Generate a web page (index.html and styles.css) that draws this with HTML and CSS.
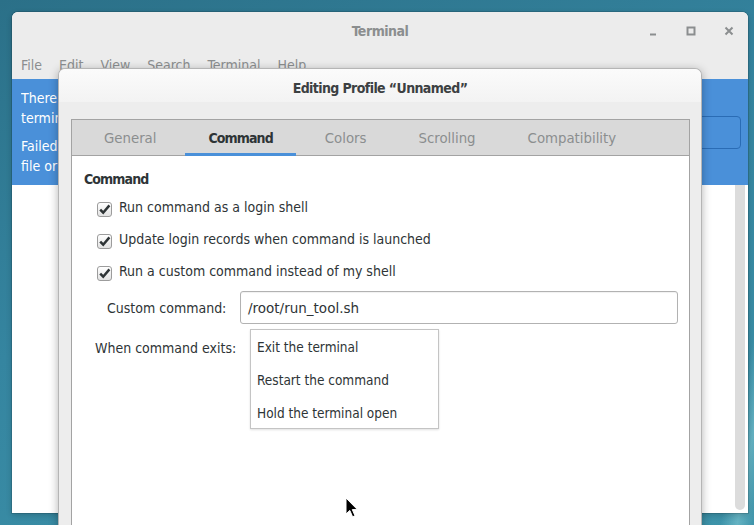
FILE: index.html
```html
<!DOCTYPE html>
<html>
<head>
<meta charset="utf-8">
<title>Terminal – Editing Profile</title>
<link rel="stylesheet" href="styles.css">
</head>
<body class="desktop">
  <div class="term-window">
    <div class="term-titlebar">
      <div class="tb-spacer"></div>
      <div class="tb-title">Terminal</div>
      <div class="tb-controls">
        <svg class="ctl" width="16" height="16" viewBox="0 0 16 16"><rect x="5" y="10.5" width="6" height="2" fill="#8b8e8f"/></svg>
        <svg class="ctl" width="16" height="16" viewBox="0 0 16 16"><rect x="4.5" y="4.5" width="7" height="7" fill="none" stroke="#8b8e8f" stroke-width="2"/></svg>
        <svg class="ctl" width="16" height="16" viewBox="0 0 16 16"><path d="M4.5 4.5 L11.5 11.5 M11.5 4.5 L4.5 11.5" stroke="#8b8e8f" stroke-width="2"/></svg>
      </div>
    </div>
    <div class="term-menubar">
      <span>File</span><span>Edit</span><span>View</span><span>Search</span><span>Terminal</span><span>Help</span>
    </div>
    <div class="infobar">
      <div class="info-text">
        <p class="info-p"><span class="line">There was</span><span class="line">terminal</span></p>
        <p class="info-p"><span class="line">Failed to</span><span class="line">file or</span></p>
      </div>
      <div class="info-btn"><span class="info-btn-label">Relaunch</span></div>
    </div>
    <div class="term-view">
      <div class="scrollbar"></div>
    </div>
  </div>

  <div class="dialog">
    <div class="dlg-header">Editing Profile “Unnamed”</div>
    <div class="dlg-body">
      <div class="notebook">
        <div class="tabs">
          <div class="tab">General</div>
          <div class="tab active">Command</div>
          <div class="tab">Colors</div>
          <div class="tab">Scrolling</div>
          <div class="tab">Compatibility</div>
        </div>
        <div class="page">
          <div class="section-title">Command</div>
          <div class="checks">
            <div class="check-row"><span class="check"><svg width="15" height="15" viewBox="0 0 15 15"><path d="M3.2 7.6 L6.2 10.7 L12.4 3.4" fill="none" stroke="#2e3436" stroke-width="2.5"/></svg></span><span>Run command as a login shell</span></div>
            <div class="check-row"><span class="check"><svg width="15" height="15" viewBox="0 0 15 15"><path d="M3.2 7.6 L6.2 10.7 L12.4 3.4" fill="none" stroke="#2e3436" stroke-width="2.5"/></svg></span><span>Update login records when command is launched</span></div>
            <div class="check-row"><span class="check"><svg width="15" height="15" viewBox="0 0 15 15"><path d="M3.2 7.6 L6.2 10.7 L12.4 3.4" fill="none" stroke="#2e3436" stroke-width="2.5"/></svg></span><span>Run a custom command instead of my shell</span></div>
          </div>
          <div class="field-row">
            <span class="field-label custom">Custom command:</span>
            <div class="entry">/root/run_tool.sh</div>
          </div>
          <div class="field-row combo-row">
            <span class="field-label exits">When command exits:</span>
            <div class="combo"></div>
          </div>
        </div>
      </div>
    </div>
  </div>

  <div class="popup">
    <div class="popup-item">Exit the terminal</div>
    <div class="popup-item">Restart the command</div>
    <div class="popup-item">Hold the terminal open</div>
  </div>

  <svg class="pointer" width="14" height="22" viewBox="0 0 14 22"><path d="M1 1 L1 17 L4.8 13.4 L7.6 19.8 L10 18.8 L7.3 12.6 L12.4 12.6 Z" fill="#000" stroke="#fff" stroke-width="1"/></svg>
</body>
</html>
```
FILE: styles.css
```css
html, body {
  margin: 0;
  padding: 0;
}

.desktop {
  width: 754px;
  height: 525px;
  overflow: hidden;
  position: relative;
  background:
    linear-gradient(100deg, rgba(255,255,255,0) 0%, rgba(255,255,255,0) 96%, rgba(140,210,220,0.5) 98%, rgba(255,255,255,0) 100%),
    linear-gradient(160deg, #2b7088 0%, #3585a0 45%, #3d93a9 100%);
  font-family: "DejaVu Sans Condensed", "DejaVu Sans", sans-serif;
  font-size: 14px;
  color: #2e3436;
}

/* Terminal window */
.term-window {
  position: absolute;
  left: 12px;
  top: 12px;
  width: 736px;
  height: 501px;
  background: #ffffff;
  border-radius: 6px 6px 0 0;
  overflow: hidden;
  display: flex;
  flex-direction: column;
  box-shadow: 0 0 0 1px rgba(0,0,0,0.12), 0 2px 6px rgba(0,0,0,0.2);
}

.term-titlebar {
  height: 38px;
  flex: none;
  background: #ececec;
  display: grid;
  grid-template-columns: 1fr auto 1fr;
  align-items: center;
}

.tb-title {
  font-weight: bold;
  letter-spacing: -0.5px;
  color: #8b8e8f;
}

.tb-controls {
  display: flex;
  justify-content: flex-end;
  gap: 22px;
  padding-right: 11px;
}

.ctl {
  display: block;
}

.term-menubar {
  height: 29px;
  flex: none;
  background: #ececec;
  display: flex;
  align-items: center;
  gap: 17px;
  padding-left: 9px;
  color: #8b8e8f;
}

.infobar {
  height: 106px;
  flex: none;
  box-sizing: border-box;
  background: #4a90d9;
  color: #ffffff;
  display: flex;
  align-items: center;
  padding: 0 7px 0 9px;
}

.info-text {
  flex: 1;
  overflow: hidden;
  align-self: flex-start;
  padding-top: 9px;
}

.info-p {
  margin: 0 0 8px 0;
}

.line {
  display: block;
  line-height: 20px;
  white-space: nowrap;
}

.info-btn {
  width: 160px;
  height: 33px;
  box-sizing: border-box;
  border: 1px solid #2a6cb5;
  border-radius: 4px;
  display: flex;
  align-items: center;
  justify-content: center;
  padding-right: 20px;
  color: #fff;
}

.term-view {
  flex: 1;
  display: flex;
  justify-content: flex-end;
  padding: 0 3px 3px 0;
}

.scrollbar {
  width: 10px;
  background: #dcdcdc;
  border-radius: 0 0 5px 5px;
}

/* Dialog */
.dialog {
  position: absolute;
  left: 58px;
  top: 68px;
  width: 644px;
  height: 480px;
  box-sizing: border-box;
  border: 1px solid #b5b5b5;
  border-bottom: none;
  border-radius: 7px 7px 0 0;
  background: #ededed;
  box-shadow: 0 2px 10px rgba(0,0,0,0.3);
  overflow: hidden;
  display: flex;
  flex-direction: column;
}

.dlg-header {
  height: 33px;
  flex: none;
  box-sizing: border-box;
  padding-top: 6px;
  line-height: 27px;
  text-align: center;
  font-weight: bold;
  letter-spacing: -0.6px;
  color: #3c4042;
  background: linear-gradient(#fbfbfb, #f3f3f3);
}

.dlg-body {
  flex: 1;
  display: flex;
  flex-direction: column;
  padding: 17px 11px 0 12px;
}

.notebook {
  flex: 1;
  display: flex;
  flex-direction: column;
  border: 1px solid #a3a3a3;
  border-bottom: none;
  background: #ffffff;
}

.tabs {
  height: 35px;
  flex: none;
  display: flex;
  background: #d9d9d9;
  border-bottom: 1px solid #a3a3a3;
  padding-left: 6px;
}

.tab {
  height: 36px;
  box-sizing: border-box;
  margin: 0 3px -1px 3px;
  padding: 2px 23px 0 23px;
  display: flex;
  align-items: center;
  border-bottom: 3px solid transparent;
  font-size: 14.8px;
  color: #8b8e8f;
}

.tab.active {
  border-bottom-color: #4a90d9;
  color: #2e3436;
  font-weight: bold;
  font-size: 14px;
  letter-spacing: -0.9px;
}

.page {
  flex: 1;
  padding: 13px 11px 0 12px;
  display: flex;
  flex-direction: column;
}

.section-title {
  line-height: 20px;
  font-weight: bold;
  letter-spacing: -0.9px;
}

.checks {
  margin-top: 2px;
}

.check-row {
  height: 32px;
  display: flex;
  align-items: center;
  padding-left: 13px;
  gap: 7px;
}

.check {
  width: 15px;
  height: 15px;
  box-sizing: border-box;
  border: 1px solid #9c9c9c;
  border-radius: 3px;
  background: linear-gradient(#ffffff, #e2e2e2);
  position: relative;
  top: 2px;
  display: flex;
  align-items: center;
  justify-content: center;
  overflow: visible;
}

.check svg {
  display: block;
  flex: none;
  margin: -1px;
}

.field-row {
  display: flex;
  align-items: center;
  margin-top: 4px;
}

.field-label.custom {
  width: 133px;
  margin-left: 23px;
  flex: none;
}

.entry {
  flex: 1;
  height: 33px;
  box-sizing: border-box;
  border: 1px solid #b2b2b2;
  border-radius: 3px;
  padding-left: 7px;
  display: flex;
  align-items: center;
  font-family: "DejaVu Sans", sans-serif;
  font-size: 13.5px;
  box-shadow: inset 0 1px 1px rgba(0,0,0,0.06);
}

.combo-row {
  margin-top: 7px;
}

.field-label.exits {
  width: 155px;
  margin-left: 11px;
  flex: none;
}

.combo {
  width: 189px;
  height: 34px;
  box-sizing: border-box;
  border: 1px solid #a8a8a8;
  border-radius: 3px;
  background: linear-gradient(#f7f7f7, #e6e6e6);
}

/* Popup menu over the combo */
.popup {
  position: absolute;
  left: 250px;
  top: 329px;
  width: 189px;
  height: 100px;
  box-sizing: border-box;
  border: 1px solid #c4c4c4;
  background: #ffffff;
  box-shadow: 0 1px 2px rgba(0,0,0,0.12);
}

.popup-item {
  height: 33px;
  display: flex;
  align-items: center;
  padding-left: 6px;
  font-size: 13.5px;
}

.pointer {
  position: absolute;
  left: 345px;
  top: 497px;
}
```
